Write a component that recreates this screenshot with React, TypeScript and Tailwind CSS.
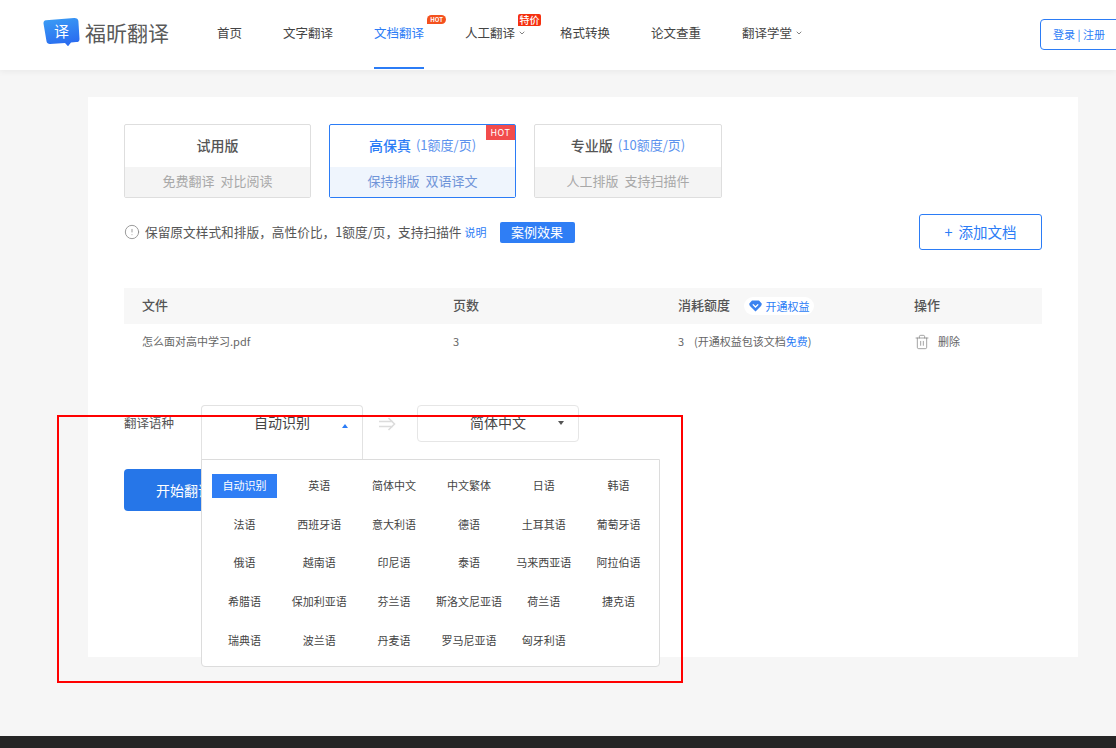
import React from "react";
import { ChevronDown, CircleAlert, Trash2 } from "lucide-react";

const font = { fontFamily: '"Noto Sans CJK SC", "Noto Sans", sans-serif' };

const navItems = [
    { label: "首页" },
    { label: "文字翻译" },
    { label: "文档翻译", active: true, hot: true },
    { label: "人工翻译", arrow: true, sale: true },
    { label: "格式转换" },
    { label: "论文查重" },
    { label: "翻译学堂", arrow: true },
];

const plans = [
    { title: "试用版", sub: "免费翻译  对比阅读", width: "w-[187px]" },
    { title: "高保真", extra: "(1额度/页)", sub: "保持排版  双语译文", active: true, width: "w-[187px]" },
    { title: "专业版", extra: "(10额度/页)", sub: "人工排版  支持扫描件", width: "w-[188px]" },
];

const languages = [
    "自动识别", "英语", "简体中文", "中文繁体", "日语", "韩语",
    "法语", "西班牙语", "意大利语", "德语", "土耳其语", "葡萄牙语",
    "俄语", "越南语", "印尼语", "泰语", "马来西亚语", "阿拉伯语",
    "希腊语", "保加利亚语", "芬兰语", "斯洛文尼亚语", "荷兰语", "捷克语",
    "瑞典语", "波兰语", "丹麦语", "罗马尼亚语", "匈牙利语",
];

const infoText = "保留原文样式和排版\uFF0C高性价比\uFF0C1额度/页\uFF0C支持扫描件";

const Logo = () => (
    <div className="flex items-center w-[174px] shrink-0 pb-[6px]">
        <div className="relative w-[37px] h-[31px] shrink-0">
            <svg width="37" height="31" viewBox="0 0 37 34" preserveAspectRatio="none" className="absolute left-0 top-0">
                <defs>
                    <linearGradient id="logoBlue" x1="0" y1="0" x2="0.3" y2="1">
                        <stop offset="0" stopColor="#3b9ff5" />
                        <stop offset="1" stopColor="#2a6df0" />
                    </linearGradient>
                </defs>
                <path d="M3 3.5 L31 1 Q35 0.8 35.4 4.5 L36.5 24 Q36.5 27.5 33 27.5 L28 28 L25 32 L22 28.5 L7 29.5 Q4 29.5 3.5 26.5 L0.5 7 Q0.3 4 3 3.5 Z" fill="url(#logoBlue)" />
            </svg>
            <span className="absolute left-[11px] top-[4px] text-[15px] leading-[20px] text-white">译</span>
        </div>
        <span className="ml-[5px] text-[21px] leading-[28px] text-[#5a5a5a] whitespace-nowrap">福昕翻译</span>
    </div>
);

const Header = () => (
    <header className="relative z-10 h-[70px] shrink-0 bg-white flex pl-[43px] shadow-[0_2px_6px_rgba(0,0,0,0.05)]">
        <Logo />
        <nav className="flex gap-[41px] h-[69px] shrink-0">
            {navItems.map((item) => (
                <div
                    key={item.label}
                    className={`relative h-full flex items-center pb-[1px] text-[12.5px] whitespace-nowrap border-b-2 ${item.active ? "text-[#2b7cf6] border-[#2b7cf6]" : "text-[#444] border-transparent"}`}
                >
                    {item.label}
                    {item.arrow && <ChevronDown size={8} strokeWidth={2} className="ml-[3px] -mr-[7px] text-[#444]" />}
                    {item.hot && (
                        <span className="absolute left-[53px] top-[15px] h-[9px] w-[19px] rounded-[5px] rounded-bl-none bg-[#f4511e] text-white text-[6px] leading-[9px] font-bold text-center">HOT</span>
                    )}
                    {item.sale && (
                        <span className="absolute left-[53px] top-[14px] h-[12px] w-[23px] rounded-[2px] rounded-bl-none bg-[#f5300f] text-white text-[10px] leading-[12px] font-medium text-center">特价</span>
                    )}
                </div>
            ))}
        </nav>
        <button className="ml-[244px] mt-[19px] h-[31px] w-[90px] shrink-0 rounded-[4px] border border-[#2b7cf6] bg-white text-[11px] text-[#2b7cf6] text-left pl-[12px] whitespace-pre">
            登录 | 注册
        </button>
    </header>
);

const PlanTabs = () => (
    <div className="flex gap-[18px]">
        {plans.map((p) => (
            <div
                key={p.title}
                className={`relative ${p.width} h-[74px] flex flex-col rounded-[2px] border ${p.active ? "border-[#2b7cf6]" : "border-[#dedede]"}`}
            >
                <div className="h-[42px] flex items-center justify-center gap-[5px] pb-[2px] text-[13px] whitespace-nowrap">
                    <span className={`text-[14px] font-medium ${p.active ? "text-[#2b7cf6]" : "text-[#555]"}`}>{p.title}</span>
                    {p.extra && <span className="text-[#5c92ee]">{p.extra}</span>}
                </div>
                <div className={`flex-1 flex items-center justify-center pb-[2px] text-[13px] whitespace-pre ${p.active ? "bg-[#eff5fd] text-[#6f94d8]" : "bg-[#f4f4f4] text-[#a8a8a8]"}`}>
                    {p.sub}
                </div>
                {p.active && (
                    <span className="absolute right-0 top-0 w-[29px] h-[15px] bg-[#f24c4c] text-white text-[9px] leading-[15px] text-center tracking-[0.5px]">HOT</span>
                )}
            </div>
        ))}
    </div>
);

const InfoRow = () => (
    <div className="mt-[16px] h-[36px] flex items-center">
        <CircleAlert size={16} strokeWidth={1.25} className="text-[#888] shrink-0" />
        <span className="ml-[5px] pb-[1px] text-[12.7px] text-[#555] whitespace-nowrap">{infoText}</span>
        <span className="ml-[3px] text-[11px] text-[#2b7cf6] whitespace-nowrap">说明</span>
        <button className="ml-[13px] w-[75px] h-[21px] rounded-[2px] bg-[#2f7ef5] text-white text-[13px] leading-[20px]">案例效果</button>
        <button className="ml-auto w-[123px] h-[36px] rounded-[3px] border border-[#2b7cf6] text-[#2b7cf6] text-[14.5px] pb-[1px] whitespace-nowrap">
            <span className="mr-[6px]">+</span>添加文档
        </button>
    </div>
);

const FileTable = () => (
    <div className="mt-[38px]">
        <div className="h-[36px] bg-[#f7f7f7] grid grid-cols-[311px_225px_236px_1fr] items-center pl-[18px] pb-[2px] text-[13px] text-[#555] font-medium">
            <span>文件</span>
            <span>页数</span>
            <div className="flex items-center whitespace-nowrap">
                消耗额度
                <span className="ml-[14px] mt-[2px] h-[18px] w-[70px] rounded-[9px] bg-white flex items-center justify-center gap-[4px] text-[11px] font-normal text-[#2b7cf6]">
                    <svg width="13" height="12" viewBox="0 0 13 12">
                        <path d="M3 0.5 H10 L12.7 3.5 Q13 5 11.8 6.2 L6.5 11.6 L1.2 6.2 Q0 5 0.3 3.5 Z" fill="#3b82f0" />
                        <path d="M3.8 4.4 L6.5 7 L9.2 4.4" fill="none" stroke="#fff" strokeWidth="1.3" />
                    </svg>
                    开通权益
                </span>
            </div>
            <span>操作</span>
        </div>
        <div className="h-[36px] grid grid-cols-[311px_225px_236px_1fr] items-center pl-[18px] pb-[1px] text-[11px] text-[#666]">
            <span>怎么面对高中学习.pdf</span>
            <span>3</span>
            <span className="whitespace-pre">3    (开通权益包该文档<span className="text-[#2b7cf6]">免费</span>)</span>
            <div className="flex items-center gap-[8px]">
                <Trash2 size={16} strokeWidth={1} className="text-[#777]" />
                <span>删除</span>
            </div>
        </div>
    </div>
);

const LanguageRow = () => (
    <div className="mt-[45px] flex items-start">
        <span className="w-[77px] h-[37px] leading-[35px] text-[12.5px] text-[#555] whitespace-nowrap">翻译语种</span>
        <div className="relative z-10 w-[162px] h-[37px]">
            <div className="relative h-[55px] rounded-t-[4px] border border-b-0 border-[#e2e2e2] bg-white flex items-start justify-center pt-[5px] text-[14px] leading-[22px] text-[#444]">
                自动识别
                <span className="absolute right-[14px] top-[18px] w-0 h-0 border-x-[3.5px] border-x-transparent border-b-[4px] border-b-[#2b7cf6]" />
            </div>
            <div className="absolute left-0 top-[54px] w-[459px] h-[208px] rounded-b-[4px] border border-[#dcdcdc] bg-white pl-[5px] pr-[3px] pt-[14px] grid grid-cols-6 auto-rows-[24px] gap-y-[14.7px] text-[11px] text-[#444]">
                {languages.map((lang, i) => (
                    <div key={lang} className="flex justify-center">
                        <span className={`h-[24px] leading-[22px] text-center whitespace-nowrap ${i === 0 ? "w-[65px] bg-[#2f7ef5] text-white" : ""}`}>{lang}</span>
                    </div>
                ))}
            </div>
        </div>
        <div className="w-[54px] h-[37px] flex items-center justify-center pr-[6px]">
            <svg width="18" height="14" viewBox="0 0 18 14" fill="none" stroke="#dcdcdc" strokeWidth="1.6">
                <path d="M1 4.5 H15 M1 9.5 H15 M10.5 1 L16.5 7 L10.5 13" />
            </svg>
        </div>
        <div className="relative w-[162px] h-[37px] rounded-[4px] border border-[#e6e6e6] flex items-center justify-center pb-[2px] text-[14px] text-[#444]">
            简体中文
            <span className="absolute right-[14px] top-[15px] w-0 h-0 border-x-[3.5px] border-x-transparent border-t-[4px] border-t-[#555]" />
        </div>
    </div>
);

const App: React.FC = () => {
    return (
        <div style={font} className="relative h-[748px] overflow-hidden bg-[#f6f6f6] flex flex-col">
            <Header />
            <main className="flex-1 pt-[27px] pl-[88px]">
                <section className="w-[990px] h-[560px] bg-white px-[36px] pt-[27px]">
                    <PlanTabs />
                    <InfoRow />
                    <FileTable />
                    <LanguageRow />
                    <button className="mt-[27px] w-[160px] h-[42px] rounded-[4px] bg-[#2676e8] text-white text-[14px] text-left pl-[32px]">开始翻译</button>
                </section>
            </main>
            <footer className="h-[12px] shrink-0 bg-[#262626]" />
            {/* annotation box drawn over the screenshot */}
            <div className="absolute z-20 left-[57px] top-[415px] w-[626px] h-[268px] border-2 border-[#f00] pointer-events-none" />
        </div>
    );
};

export default App;
